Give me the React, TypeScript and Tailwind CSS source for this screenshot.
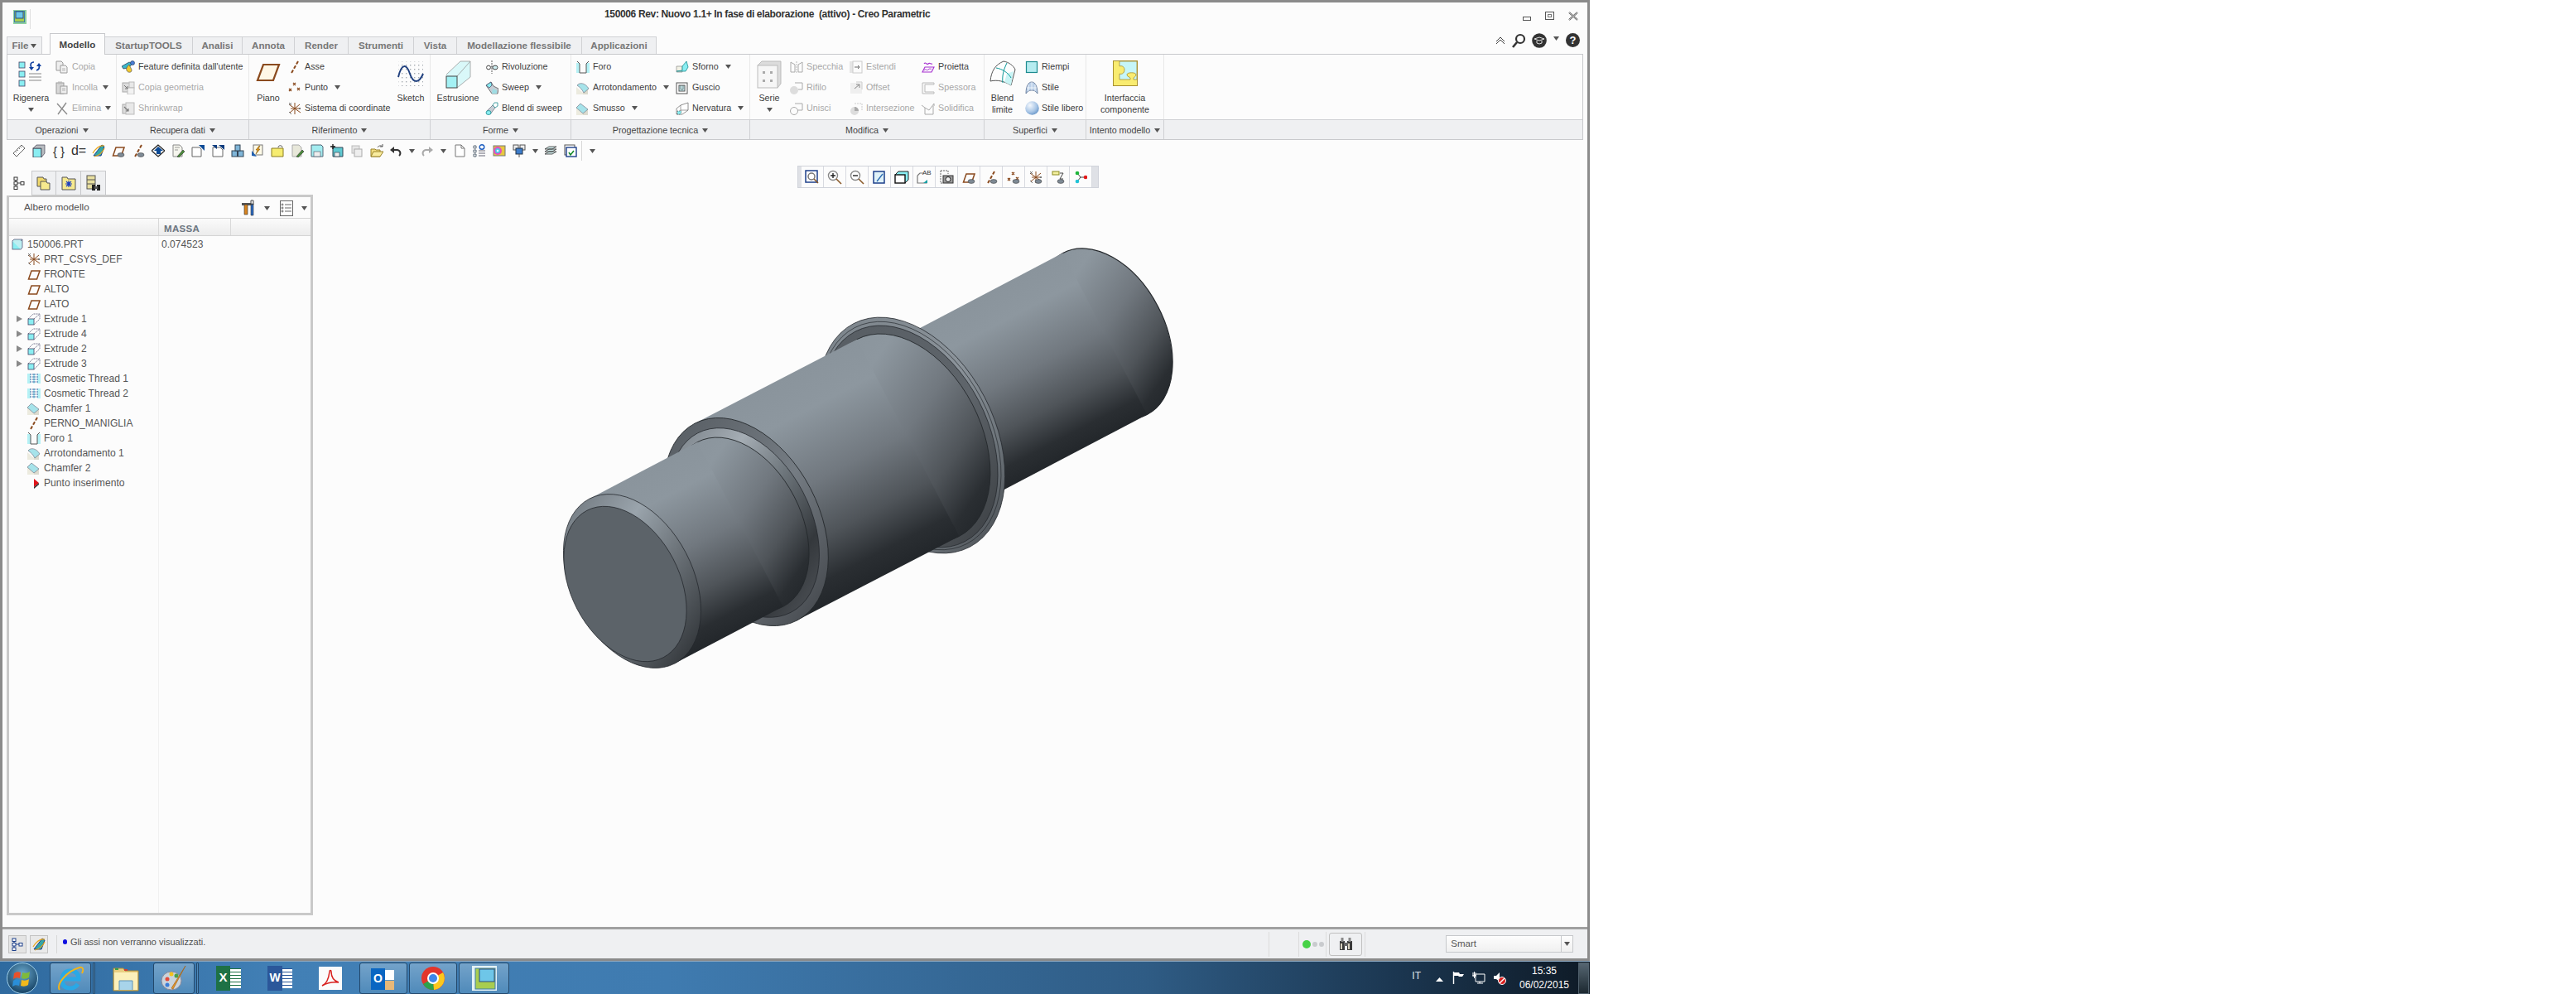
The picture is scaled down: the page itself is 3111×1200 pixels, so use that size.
import type { ReactNode } from 'react';

const BROWN = '#8a4a1e';
const CYAN = '#8aeef2';
const NAVY = '#1c3f8a';
const GR = '#9a9a9a';

const Svg = ({ s = 16, vb = 16, children }: { s?: number; vb?: number; children: ReactNode }) => (
  <svg width={s} height={s} viewBox={`0 0 ${vb} ${vb}`} className="block shrink-0">
    {children}
  </svg>
);

const Eye = () => <ellipse cx="11" cy="13" rx="4" ry="2.4" fill="#7f8b96" stroke="#444" strokeWidth="0.6" />;

// datum + feature icons
const PlaneI = ({ eye }: { eye?: boolean }) => (
  <Svg>
    <path d="M1.5 14 L5 4 H15 L11.5 14Z" fill="none" stroke={BROWN} strokeWidth="1.5" />
    {eye && <Eye />}
  </Svg>
);
const AxisI = ({ eye }: { eye?: boolean }) => (
  <Svg>
    <path d="M12 1 L4 15" stroke={BROWN} strokeWidth="2" strokeDasharray="4 2" fill="none" />
    {eye && <Eye />}
  </Svg>
);
const PointI = ({ eye }: { eye?: boolean }) => (
  <Svg>
    <path d="M6 2l3 3m0-3l-3 3M1 9l3 3m0-3l-3 3M11 8l3 3m0-3l-3 3" stroke={BROWN} strokeWidth="1.3" fill="none" />
    {eye && <Eye />}
  </Svg>
);
const CsysI = ({ eye }: { eye?: boolean }) => (
  <Svg>
    <path d="M8 1v14M1 3l14 10M14 3L2 13M3 8h10" stroke={BROWN} strokeWidth="1" fill="none" />
    <path d="M1 1l3 3m0-3L1 4M13 7l2 2m0-2l-2 2M1 12l3 3" stroke="#555" strokeWidth="0.8" fill="none" />
    {eye && <Eye />}
  </Svg>
);
const PartI = () => (
  <Svg s={14} vb={14}>
    <rect x="1" y="3" width="10" height="10" fill={CYAN} stroke="#557" strokeWidth="0.8" />
    <path d="M1 3l2-2h10v10l-2 2M11 3l2-2" fill="#bdeff2" stroke="#557" strokeWidth="0.8" />
  </Svg>
);
const ExtrudeI = () => (
  <Svg>
    <rect x="1" y="8" width="7" height="7" fill={CYAN} stroke="#446" strokeWidth="0.8" />
    <path d="M1 8l6-6h8v6l-7 7M8 8l7-6" fill="none" stroke="#446" strokeWidth="0.7" strokeDasharray="2 1" />
  </Svg>
);
const ThreadI = () => (
  <Svg>
    <rect x="0" y="2" width="16" height="12" fill="#b5f1f5" />
    <rect x="4" y="2" width="3" height="12" fill="#fbfbfb" />
    <rect x="9" y="2" width="3" height="12" fill="#fbfbfb" />
    <path d="M4 2v12M7 2v12M9 2v12M12 2v12" stroke={NAVY} strokeWidth="0.8" strokeDasharray="2 1" />
  </Svg>
);
const ChamferI = () => (
  <Svg>
    <path d="M0 7l8 7v2H0z" fill="#ecebdf" />
    <path d="M8 14v2h6v-7z" fill="#dcdbcf" />
    <path d="M0 7l5-5 9 7-6 5z" fill="#a6e3ea" stroke="#667" strokeWidth="0.6" />
  </Svg>
);
const RoundI = () => (
  <Svg>
    <path d="M0 7l8 7v2H0z" fill="#ecebdf" />
    <path d="M8 14v2h6v-7z" fill="#dcdbcf" />
    <path d="M1 5C4 1 11 2 15 9l-6 5C7 10 4 7 1 5z" fill="#a6e3ea" stroke="#667" strokeWidth="0.6" />
  </Svg>
);
const HoleI = () => (
  <Svg>
    <rect x="0" y="3" width="16" height="12" fill="#b5f1f5" />
    <path d="M1 1l3 3v11h8V4l3-3" fill="#fbfbfb" stroke="#555" strokeWidth="1" />
  </Svg>
);

const SmallIcons: Record<string, ReactNode> = {
  copy: (
    <Svg>
      <path d="M1 1h6l2 2v9H1z" fill="#eee" stroke={GR} />
      <path d="M6 6h6l2 2v7H6z" fill="#f4f4f4" stroke={GR} />
      <path d="M8 10h4M8 12h4" stroke={GR} strokeWidth="0.7" />
    </Svg>
  ),
  paste: (
    <Svg>
      <rect x="1" y="2" width="9" height="13" fill="#d8d8d8" stroke={GR} />
      <rect x="3" y="0.5" width="5" height="3" fill="#bbb" />
      <rect x="6" y="6" width="8" height="9" fill="#eee" stroke={GR} />
      <path d="M8 9h4M8 11h4" stroke={GR} strokeWidth="0.7" />
    </Svg>
  ),
  del: (
    <Svg>
      <path d="M2 2l12 13M13 1L3 15" stroke="#8d8d8d" strokeWidth="1.4" />
    </Svg>
  ),
  feature: (
    <Svg>
      <path d="M0 7L9 2l4 2-5 5-6 1z" fill="#3bb7c9" stroke="#235" strokeWidth="0.7" />
      <circle cx="13" cy="3" r="2.5" fill="#4a7fd8" stroke="#235" strokeWidth="0.6" />
      <path d="M9 5c-3 3-4 5-3 7 1 3 6 3 6 0 0-2-2-4-3-7z" fill="#f2c92e" stroke="#555" strokeWidth="0.7" />
    </Svg>
  ),
  geom: (
    <Svg>
      <rect x="1" y="2" width="9" height="11" fill="#ddd" stroke="#aaa" />
      <rect x="9" y="1" width="6" height="7" fill="#e8e8e8" stroke="#bbb" />
      <rect x="7" y="8" width="8" height="8" fill="#f2f2f2" stroke="#bbb" />
      <path d="M3 5l4 4M7 6v3H4" stroke="#777" strokeWidth="1" fill="none" />
    </Svg>
  ),
  rev: (
    <Svg>
      <path d="M8 0v16" stroke="#333" strokeWidth="0.8" strokeDasharray="2 1" />
      <path d="M4 8h8" stroke="#555" strokeWidth="0.7" />
      <circle cx="4" cy="8.5" r="2.4" fill="#fff" stroke="#444" />
      <ellipse cx="12" cy="8.5" rx="3" ry="2.4" fill="#cfeff2" stroke="#444" />
    </Svg>
  ),
  sweep: (
    <Svg>
      <path d="M1 5l6-4 3 5 6 3-1 6H8z" fill="#c6cdd4" stroke="#444" strokeWidth="0.7" />
      <path d="M1 5l6-4 1 4-3 3z" fill={CYAN} stroke="#446" strokeWidth="0.7" />
      <path d="M9 9l5 2v4H8z" fill="#9fdde4" />
    </Svg>
  ),
  bsweep: (
    <Svg>
      <path d="M2 11l4 4 6-8-3-3z" fill="#c6cdd4" stroke="#667" strokeWidth="0.7" />
      <ellipse cx="4" cy="13" rx="3" ry="2.5" fill={CYAN} stroke="#1d8b8f" strokeWidth="0.8" />
      <path d="M9 4l2-3h4v4l-3 2z" fill="#fff" stroke="#1d8b8f" strokeWidth="0.8" />
    </Svg>
  ),
  draft: (
    <Svg>
      <path d="M1 7h7v7H1z" fill="#f2f2e6" stroke="#777" strokeWidth="0.6" />
      <path d="M8 7l5-6 2 7-3 5H1l7-1z" fill={CYAN} stroke="#1d8b8f" strokeWidth="0.8" />
    </Svg>
  ),
  shell: (
    <Svg>
      <rect x="1" y="2" width="13" height="13" fill="#fff" stroke="#555" />
      <rect x="4" y="5" width="7" height="7" fill="#c8eef2" stroke="#555" />
      <path d="M6 5v5h3V5" fill="none" stroke="#555" strokeWidth="0.7" />
    </Svg>
  ),
  rib: (
    <Svg>
      <path d="M1 8l5-4 9-3v9l-7 5H1z" fill="#fff" stroke="#777" strokeWidth="0.8" />
      <path d="M6 4v6h9M6 10l-5 5" fill="none" stroke="#777" strokeWidth="0.7" />
      <path d="M2 11h5l-1 4H2z" fill={CYAN} stroke="#333" strokeWidth="0.6" strokeDasharray="1 1" />
    </Svg>
  ),
  mirror: (
    <Svg>
      <path d="M1 2l5 3v9H1zM15 2l-5 3v9h5z" fill="none" stroke="#aaa" />
      <path d="M8 1v14" stroke="#bbb" strokeDasharray="2 1" />
    </Svg>
  ),
  trim: (
    <Svg>
      <circle cx="5" cy="11" r="5" fill="#ddd" />
      <path d="M6 2h9v8H10" fill="none" stroke="#aaa" />
    </Svg>
  ),
  merge: (
    <Svg>
      <circle cx="5" cy="11" r="4.5" fill="none" stroke="#aaa" />
      <path d="M6 2h9v8H9" fill="none" stroke="#aaa" />
    </Svg>
  ),
  extend: (
    <Svg>
      <rect x="0" y="1" width="4" height="14" fill="#e5e5e5" />
      <rect x="4" y="1" width="11" height="14" fill="#fbfbfb" stroke="#ccc" />
      <path d="M6 8h6m-2-2l2 2-2 2" stroke="#666" fill="none" />
    </Svg>
  ),
  offset: (
    <Svg>
      <rect x="1" y="2" width="14" height="13" fill="#efefef" />
      <path d="M8 1h7v9" fill="none" stroke="#ccc" />
      <path d="M12 4L6 9m6-5v4m0-4H8" stroke="#888" fill="none" />
    </Svg>
  ),
  inter: (
    <Svg>
      <circle cx="6" cy="11" r="5" fill="#ddd" />
      <path d="M6 2h9v8" fill="none" stroke="#ccc" strokeDasharray="2 1" />
      <path d="M6 6a5 5 0 0 1 5 5H6z" fill="#aaa" />
    </Svg>
  ),
  project: (
    <Svg>
      <path d="M3 4c2-3 3 2 5 0s3 1 5 0M1 14l3-6h11l-3 6z" fill="none" stroke="#a52fd0" strokeWidth="1.1" />
      <path d="M3 12c2-3 3 1 5-1s3 0 4-1" fill="none" stroke="#a52fd0" />
    </Svg>
  ),
  thicken: (
    <Svg>
      <path d="M1 2h14v2H4v9h11v2H1z" fill="#f7f7f7" stroke="#bbb" />
    </Svg>
  ),
  solidify: (
    <Svg>
      <path d="M0 4l4 3 5 3 6-8v3M4 7v8h10V5" fill="none" stroke="#aaa" />
    </Svg>
  ),
  fill: (
    <Svg>
      <rect x="1.5" y="1.5" width="13" height="13" fill="#b5ecf0" stroke="#1d8b8f" strokeWidth="1.2" />
    </Svg>
  ),
  style: (
    <Svg>
      <path d="M1 15C1 6 4 1 8 1s7 5 7 14c-2-3-4-4-7-4s-5 1-7 4z" fill="#bcd1ea" stroke="#5a7090" strokeWidth="0.8" />
      <path d="M4 4v8M8 1v10M12 4v8M2 8h12" stroke="#fff" strokeWidth="0.7" />
    </Svg>
  ),
  ball: (
    <svg width="17" height="17" viewBox="0 0 16 16" className="block shrink-0">
      <defs>
        <radialGradient id="ballG" cx="0.35" cy="0.3" r="0.8">
          <stop offset="0" stopColor="#f4f8fd" />
          <stop offset="0.6" stopColor="#a9c6e6" />
          <stop offset="1" stopColor="#5f8fc4" />
        </radialGradient>
      </defs>
      <circle cx="8" cy="8" r="7.8" fill="url(#ballG)" />
    </svg>
  ),
  wrap: (
    <Svg>
      <rect x="1" y="3" width="9" height="11" fill="#ddd" stroke="#aaa" />
      <rect x="5" y="1" width="10" height="14" fill="#e8e8e8" stroke="#bbb" />
      <path d="M3 6l5 5M8 8v3H5" stroke="#777" strokeWidth="1.1" fill="none" />
    </Svg>
  ),
};

const Down = ({ cls = 'ml-[8px]' }: { cls?: string }) => (
  <svg width="7" height="5" viewBox="0 0 7 5" className={`block shrink-0 ${cls}`}>
    <path d="M0 0h7L3.5 5z" fill="#555" />
  </svg>
);

const Tool = ({ icon, label, off, arrow }: { icon: ReactNode; label: string; off?: boolean; arrow?: string }) => (
  <div className="flex h-[25px] items-center">
    <span className="flex w-[16px] shrink-0 justify-center">{icon}</span>
    <span className={`ml-[4px] whitespace-nowrap ${off ? 'text-[#a8a8a8]' : 'text-[#404040]'}`}>{label}</span>
    {arrow && <Down cls={arrow} />}
  </div>
);

const Big = ({ icon, lines, w, arrow }: { icon: ReactNode; lines: string[]; w: string; arrow?: boolean }) => (
  <div className={`flex shrink-0 flex-col items-center ${w}`}>
    <div className="flex h-[43px] items-start justify-center pt-[5px]">{icon}</div>
    {lines.map((l) => (
      <div key={l} className="h-[14px] whitespace-nowrap leading-[14px] text-[#404040]">
        {l}
      </div>
    ))}
    {arrow && (
      <div className="flex h-[14px] items-center">
        <Down cls="" />
      </div>
    )}
  </div>
);

const Group = ({ title, w, children }: { title: string; w: string; children: ReactNode }) => (
  <div className={`flex shrink-0 flex-col ${w}`}>
    <div className="flex h-[78px] border-r border-[#e8e8e8] pt-[2px]">{children}</div>
    <div className="flex h-[24px] items-center justify-center border-r border-t border-[#cfd0d3] bg-[#eff0f2] pt-[1px] text-[#444]">
      <span className="whitespace-nowrap">{title}</span>
      <Down cls="ml-[5px]" />
    </div>
  </div>
);

const BigIcons = {
  regen: (
    <svg width="32" height="33" viewBox="0 0 32 33" className="block">
      <rect x="1" y="2" width="7" height="7" fill={CYAN} stroke="#446" strokeWidth="0.8" />
      <rect x="1" y="13" width="7" height="7" fill={CYAN} stroke="#446" strokeWidth="0.8" />
      <rect x="1" y="24" width="7" height="7" fill={CYAN} stroke="#446" strokeWidth="0.8" />
      <path d="M19 2c-4 0-5 3-3 7M22 12c3-1 4-3 3-6" fill="none" stroke="#0f3f9f" strokeWidth="1.7" />
      <path d="M13 8h6l-3 4zM22 7h6l-3-4z" fill="#0f3f9f" />
      <path d="M13 16h15M13 20h15M13 24h15" stroke="#888" />
    </svg>
  ),
  plane: (
    <svg width="30" height="24" viewBox="0 0 30 24" className="mt-[3px] block">
      <path d="M2 21L9 2h19l-7 19z" fill="#fff7e6" stroke={BROWN} strokeWidth="2.2" />
    </svg>
  ),
  sketch: (
    <svg width="32" height="32" viewBox="0 0 32 32" className="block">
      <pattern id="dots" width="5" height="5" patternUnits="userSpaceOnUse">
        <rect width="1.4" height="1.4" fill="#a6acb2" />
      </pattern>
      <rect x="1" y="1" width="30" height="30" fill="url(#dots)" />
      <path d="M1 20C5 3 11 4 15 16s11 12 16 0" fill="none" stroke="#20407f" strokeWidth="2" />
    </svg>
  ),
  extrude: (
    <svg width="32" height="34" viewBox="0 0 32 34" className="block">
      <path d="M2 17L19 1h12v19L15 33H2z" fill="#d9f8f9" />
      <path d="M2 17L19 1h12v19L15 33M15 19L31 1" fill="none" stroke="#999" strokeWidth="0.8" />
      <rect x="2" y="19" width="13" height="14" fill="#a4f1f4" stroke="#444" />
    </svg>
  ),
  pattern: (
    <svg width="30" height="34" viewBox="0 0 30 34" className="block">
      <path d="M1 6l5-5h23v27l-4 5z" fill="#dcdcdc" stroke="#bbb" />
      <rect x="1" y="6" width="24" height="27" fill="#f6f6f6" stroke="#bbb" />
      <path d="M7 13h3v3H7zM16 13h3v3h-3zM7 23h3v3H7zM16 23h3v3h-3z" fill="#aaa" />
    </svg>
  ),
  blend: (
    <svg width="32" height="32" viewBox="0 0 32 32" className="block">
      <path d="M1 25C2 13 7 5 17 1c6 1 12 5 14 10l-5 19C18 25 9 23 1 25z" fill="#fdfdfd" stroke="#555" />
      <path d="M21 16l8-3-3 17-8-4z" fill="#c9f4f5" />
      <path d="M8 9c7 1 15 6 18 12M21 3c-4 8-6 16-5 24" fill="none" stroke="#0f9a9a" strokeWidth="1" />
    </svg>
  ),
  iface: (
    <svg width="30" height="31" viewBox="0 0 30 31" className="block">
      <rect x="0.5" y="0.5" width="29" height="30" fill="#f9ec70" stroke="#a89030" />
      <path
        d="M8 1H29V23H25V21C25 20 28 20 28 17C28 14 17 14 17 17C17 20 21 20 21 21V23H8V16C10 17 14 16 14 11C14 7 10 6 8 7Z"
        fill="#c6f6f8"
        stroke="#a89030"
        strokeWidth="0.8"
      />
    </svg>
  ),
};

const Hammer = () => (
  <svg width="20" height="20" viewBox="0 0 20 20" className="block">
    <path d="M1 4h11l1 3H1z" fill="#555" />
    <path d="M4 6h4v12H4z" fill="#d88420" stroke="#333" strokeWidth="0.6" />
    <path d="M12 5h3v14h-3z" fill="#2b6cc5" stroke="#333" strokeWidth="0.6" />
    <path d="M12 1h3v5h-3z" fill="none" stroke="#444" />
  </svg>
);

const QuickIcons: ReactNode[] = [
  <Svg key="q1">
    <path d="M1 11L11 1l4 4L5 15z" fill="#fff" stroke="#666" />
    <path d="M4 9l1 1M6 7l1 1M8 5l1 1M10 3l1 1" stroke="#666" />
  </Svg>,
  <Svg key="q2">
    <rect x="1" y="5" width="10" height="11" fill={CYAN} stroke="#445" />
    <path d="M1 5l4-4h10v10l-4 5V5z" fill="#b8bcc0" stroke="#445" strokeWidth="0.7" />
  </Svg>,
  <span key="q3" className="text-[15px] leading-none text-[#333]">{'{ }'}</span>,
  <span key="q4" className="text-[16px] leading-none text-[#333]">d=</span>,
  <Svg key="q5">
    <path d="M2 14L12 1l3 2-4 11z" fill="#35a6a6" stroke={NAVY} />
    <path d="M1 11C6 3 10 1 15 2M3 15c5-1 10-5 12-10" fill="none" stroke="#e8a41a" strokeWidth="1.2" />
  </Svg>,
  <PlaneI key="q6" eye />,
  <AxisI key="q7" eye />,
  <Svg key="q8">
    <path d="M8 1L0 8l8 7 8-7z" fill="#eee" stroke="#222" strokeWidth="1.2" />
    <path d="M8 3L3 8h3v4h5V8h3z" fill="#0c4a96" />
  </Svg>,
  <Svg key="q9">
    <path d="M2 1h8l3 3v11H2z" fill="#f6f6ee" stroke="#888" />
    <path d="M4 4h6M4 7h4" stroke="#999" />
    <path d="M7 15l7-8 2 2-7 7z" fill="#4a8d3a" stroke="#333" strokeWidth="0.6" />
  </Svg>,
  <Svg key="q10">
    <path d="M1 4h9l2 2v9H1z" fill="#fff" stroke="#666" />
    <path d="M9 1h7v7z" fill="#0c4a96" />
  </Svg>,
  <Svg key="q11">
    <path d="M2 4h9l3 3v8H2z" fill="#fff" stroke="#666" />
    <path d="M1 1h6v5zM9 1h7v6z" fill="#0f3d7f" />
  </Svg>,
  <Svg key="q12">
    <rect x="1" y="8" width="6.5" height="7" fill="#7fb5d8" stroke="#345" />
    <rect x="8.5" y="8" width="6.5" height="7" fill="#7fb5d8" stroke="#345" />
    <rect x="5" y="1" width="6" height="7" fill="#7fb5d8" stroke="#345" />
  </Svg>,
  <Svg key="q13">
    <rect x="3" y="1" width="11" height="12" fill="#fffbe8" stroke="#777" />
    <path d="M10 2L6 7h2l-2 5 5-6H9l2-4z" fill="#e59612" stroke="#6a4a10" strokeWidth="0.5" />
    <path d="M1 8v6l6 1z" fill="#1f5fb0" />
  </Svg>,
  <Svg key="q14">
    <path d="M1 5h14v10H1z" fill="#f6ec70" stroke="#8a7c20" />
    <path d="M9 4c0-3 5-3 5 0" fill="none" stroke="#555" />
  </Svg>,
  <Svg key="q15">
    <path d="M2 1h8l3 3v11H2z" fill="#e8e8da" stroke="#aaa" />
    <path d="M7 15l7-8 2 2-7 7z" fill="#4a8d3a" stroke="#333" strokeWidth="0.6" />
  </Svg>,
  <Svg key="q16">
    <path d="M1 1h12l2 2v12H1z" fill="#a3ecf0" stroke="#567" />
    <rect x="4" y="9" width="8" height="6" fill="#eee" stroke="#567" strokeWidth="0.7" />
  </Svg>,
  <Svg key="q17">
    <path d="M3 4h12v11H3z" fill="#5fc9d1" stroke="#345" />
    <rect x="5" y="10" width="6" height="5" fill="#eee" stroke="#345" strokeWidth="0.7" />
    <path d="M0 3h6M3 0v6" stroke="#111" strokeWidth="1.3" fill="none" />
  </Svg>,
  <Svg key="q18">
    <rect x="2" y="2" width="9" height="9" fill="#e6e6e6" stroke="#bbb" />
    <rect x="5" y="6" width="9" height="9" fill="#eee" stroke="#aaa" />
  </Svg>,
  <Svg key="q19">
    <path d="M1 6h5l1 1h5v8H1z" fill="#f3df82" stroke="#99822a" />
    <path d="M1 15l3-6h12l-4 6z" fill="#f9ec9f" stroke="#99822a" />
    <path d="M9 4c1-2 4-3 6-1m0-3v3h-3" fill="none" stroke="#555" />
  </Svg>,
  <Svg key="q20">
    <path d="M3 7h6a4 4 0 0 1 2 7" fill="none" stroke="#333" strokeWidth="2" />
    <path d="M0 7l5-4v8z" fill="#333" />
  </Svg>,
  <Svg key="q21">
    <path d="M13 7H7a4 4 0 0 0-2 7" fill="none" stroke="#aaa" strokeWidth="2" />
    <path d="M16 7l-5-4v8z" fill="#aaa" />
  </Svg>,
  <Svg key="q22">
    <path d="M3 1h7l4 4v10H3z" fill="#fff" stroke="#777" />
    <path d="M10 1v4h4" fill="none" stroke="#777" />
  </Svg>,
  <Svg key="q23">
    <path d="M1 2h3v3H1zM1 7h3v3H1zM1 12h3v3H1z" fill="none" stroke="#345" strokeWidth="0.8" />
    <path d="M7 8h8M7 11h8M7 14h8" stroke="#667" />
    <circle cx="11" cy="3.5" r="2.8" fill="none" stroke="#1b5cc0" strokeWidth="1.4" />
  </Svg>,
  <Svg key="q24">
    <rect x="1" y="2" width="14" height="12" fill="#e8c740" stroke="#777" />
    <circle cx="6" cy="8" r="5" fill="#e34fc0" />
    <circle cx="6" cy="8" r="3" fill="#4ac9e3" />
    <circle cx="6" cy="8" r="1.3" fill="#fff" />
  </Svg>,
  <Svg key="q25">
    <rect x="1" y="1" width="6" height="6" fill="#eee" stroke="#555" />
    <rect x="9" y="1" width="6" height="6" fill="#eee" stroke="#555" />
    <rect x="4" y="5" width="8" height="7" fill="#3d7dcb" stroke="#234" />
    <path d="M8 12v4" stroke="#555" />
  </Svg>,
  <Svg key="q26">
    <path d="M1 6l5-3h9l-5 3zM1 9l5-3h9l-5 3zM1 12l5-3h9l-5 3z" fill="#cde6e6" stroke="#333" strokeWidth="0.8" />
  </Svg>,
  <Svg key="q27">
    <rect x="1" y="1" width="12" height="12" fill="#fff" stroke="#555" />
    <rect x="3" y="4" width="12" height="11" fill="#fff" stroke={NAVY} strokeWidth="1.4" />
    <path d="M6 10l2 3 4-5" fill="none" stroke="#148a2a" strokeWidth="1.6" />
  </Svg>,
];

// width of each quick toolbar cell, arrows are narrower
const quickRow: Array<{ icon?: number; w: string }> = [
  ...Array.from({ length: 20 }, (_, i) => ({ icon: i, w: 'w-[24px]' })),
  { w: 'w-[12px]' },
  { icon: 20, w: 'w-[24px]' },
  { w: 'w-[16px]' },
  { icon: 21, w: 'w-[24px]' },
  { icon: 22, w: 'w-[24px]' },
  { icon: 23, w: 'w-[24px]' },
  { icon: 24, w: 'w-[24px]' },
  { w: 'w-[14px]' },
  { icon: 25, w: 'w-[24px]' },
  { icon: 26, w: 'w-[24px]' },
];

const FloatIcons: ReactNode[] = [
  <Svg key="f1" s={18} vb={18}>
    <rect x="1" y="1" width="14" height="14" fill="#fff" stroke={NAVY} strokeWidth="1.5" />
    <circle cx="8" cy="8" r="4" fill="none" stroke="#777" strokeWidth="1.5" />
    <path d="M11 11l5 5" stroke="#8a5a2a" strokeWidth="1.6" />
  </Svg>,
  <Svg key="f2" s={18} vb={18}>
    <circle cx="7" cy="7" r="5.5" fill="#fff" stroke="#888" strokeWidth="1.4" />
    <path d="M4 7h6M7 4v6" stroke="#222" strokeWidth="1.4" />
    <path d="M11 11l6 6" stroke="#8a5a2a" strokeWidth="1.6" />
  </Svg>,
  <Svg key="f3" s={18} vb={18}>
    <circle cx="7" cy="7" r="5.5" fill="#fff" stroke="#888" strokeWidth="1.4" />
    <path d="M4 7h6" stroke="#222" strokeWidth="1.4" />
    <path d="M11 11l6 6" stroke="#8a5a2a" strokeWidth="1.6" />
  </Svg>,
  <Svg key="f4" s={18} vb={18}>
    <rect x="2" y="2" width="13" height="14" fill="#dff1f8" stroke={NAVY} strokeWidth="1.5" />
    <path d="M6 14l7-9" stroke="#2a6ab0" strokeWidth="1.3" />
  </Svg>,
  <Svg key="f5" s={18} vb={18}>
    <path d="M1 6l4-4h12v10l-4 4" fill={CYAN} stroke="#222" />
    <rect x="1" y="6" width="12" height="10" fill="#fff" stroke="#111" strokeWidth="1.4" />
  </Svg>,
  <span key="f6" className="relative block h-[18px] w-[18px]">
    <Svg s={18} vb={18}>
      <path d="M1 7l3-3h4M1 7v9h11v-3" fill="none" stroke="#777" strokeWidth="1.2" />
      <path d="M8 16h5v-4z" fill="#1aa0a6" />
    </Svg>
    <span className="absolute left-[7px] top-[-1px] text-[8px] leading-[10px] text-[#333]">AB</span>
  </span>,
  <Svg key="f7" s={18} vb={18}>
    <path d="M2 1h9v4M2 1v15h3" fill="none" stroke="#666" strokeDasharray="2 1" />
    <rect x="5" y="7" width="12" height="9" fill="#999" stroke="#333" />
    <circle cx="11" cy="11.5" r="3" fill="#eee" stroke="#222" />
  </Svg>,
  <PlaneI key="f8" eye />,
  <AxisI key="f9" eye />,
  <PointI key="f10" eye />,
  <CsysI key="f11" eye />,
  <Svg key="f12">
    <rect x="1" y="1" width="8" height="4" fill="#f4f0a0" stroke="#8a8a20" />
    <path d="M10 3h4l-4 7h4" fill="none" stroke="#444" />
    <Eye />
  </Svg>,
  <Svg key="f13">
    <path d="M4 3l4 5 7 0M8 8l-4 5" stroke="#444" fill="none" />
    <circle cx="4" cy="3" r="2.3" fill="#1eb53a" />
    <circle cx="14" cy="8" r="2.3" fill="#e21a1a" />
    <circle cx="4" cy="13" r="2.3" fill="#22c4d8" />
  </Svg>,
];

type Node = { label: string; icon: ReactNode; arrow?: boolean };
const treeNodes: Node[] = [
  { label: 'PRT_CSYS_DEF', icon: <CsysI /> },
  { label: 'FRONTE', icon: <PlaneI /> },
  { label: 'ALTO', icon: <PlaneI /> },
  { label: 'LATO', icon: <PlaneI /> },
  { label: 'Extrude 1', icon: <ExtrudeI />, arrow: true },
  { label: 'Extrude 4', icon: <ExtrudeI />, arrow: true },
  { label: 'Extrude 2', icon: <ExtrudeI />, arrow: true },
  { label: 'Extrude 3', icon: <ExtrudeI />, arrow: true },
  { label: 'Cosmetic Thread 1', icon: <ThreadI /> },
  { label: 'Cosmetic Thread 2', icon: <ThreadI /> },
  { label: 'Chamfer 1', icon: <ChamferI /> },
  { label: 'PERNO_MANIGLIA', icon: <AxisI /> },
  { label: 'Foro 1', icon: <HoleI /> },
  { label: 'Arrotondamento 1', icon: <RoundI /> },
  { label: 'Chamfer 2', icon: <ChamferI /> },
  {
    label: 'Punto inserimento',
    icon: (
      <Svg>
        <path d="M2 8h6V3l6 5-6 5V8H2z" fill="#e0141a" />
        <path d="M8 13l6-5v2l-6 5z" fill="#333" />
      </Svg>
    ),
  },
];

const tabs = [
  { t: 'StartupTOOLS', w: 'w-[106px]' },
  { t: 'Analisi', w: 'w-[60px]' },
  { t: 'Annota', w: 'w-[63px]' },
  { t: 'Render', w: 'w-[65px]' },
  { t: 'Strumenti', w: 'w-[79px]' },
  { t: 'Vista', w: 'w-[52px]' },
  { t: 'Modellazione flessibile', w: 'w-[151px]' },
  { t: 'Applicazioni', w: 'w-[90px]' },
];

// page coordinates, the svg viewBox below is cut to them
const NX = 0.4617;
const NY = 0.887;
const DEG = -27.5;
const RATIO = 0.654;

const Ring = ({ c, r, fill, line = '#23272b', sw = 0.8 }: { c: number[]; r: number; fill: string; line?: string; sw?: number }) => (
  <ellipse
    cx={c[0]}
    cy={c[1]}
    rx={r * RATIO}
    ry={r}
    fill={fill}
    stroke={line}
    strokeWidth={sw}
    transform={`rotate(${DEG} ${c[0]} ${c[1]})`}
  />
);

const bodyPath = (a: number[], b: number[], r: number) =>
  `M${a[0] + r * NX} ${a[1] + r * NY}L${b[0] + r * NX} ${b[1] + r * NY}L${b[0] - r * NX} ${b[1] - r * NY}L${a[0] - r * NX} ${a[1] - r * NY}Z`;

const cylStops = (
  <>
    <stop offset="0" stopColor="#8a949c" />
    <stop offset="0.18" stopColor="#8d979f" />
    <stop offset="0.48" stopColor="#71787f" />
    <stop offset="0.72" stopColor="#4f5459" />
    <stop offset="0.9" stopColor="#2a2e32" />
    <stop offset="1" stopColor="#23272b" />
  </>
);

const Grad = ({ id, c, r, children }: { id: string; c: number[]; r: number; children: ReactNode }) => (
  <linearGradient
    id={id}
    gradientUnits="userSpaceOnUse"
    x1={c[0] - r * NX}
    y1={c[1] - r * NY}
    x2={c[0] + r * NX}
    y2={c[1] + r * NY}
  >
    {children}
  </linearGradient>
);

const Shaft = () => {
  const c0 = [763.5, 701.5];
  const cFace = [755, 705];
  const cNeck = [894, 633];
  const cLeft = [901, 630];
  const cFillet = [899, 631];
  const cMidEnd = [1096.6, 528.6];
  const cFl1 = [1099, 527];
  const cFl2 = [1101, 525.5];
  const cEnd = [1334.5, 403];
  return (
    <svg width="800" height="550" viewBox="640 280 800 550" className="absolute left-[262px] top-[85px]">
      <defs>
        <Grad id="gSmall" c={c0} r={112}>{cylStops}</Grad>
        <Grad id="gMid" c={cLeft} r={134}>{cylStops}</Grad>
        <Grad id="gEnd" c={cEnd} r={110}>{cylStops}</Grad>
        <Grad id="gFlange" c={cFl2} r={152}>
          <stop offset="0" stopColor="#7d858c" />
          <stop offset="0.5" stopColor="#8b939a" />
          <stop offset="0.82" stopColor="#6a7177" />
          <stop offset="1" stopColor="#4f5459" />
        </Grad>
        <Grad id="gFlangeIn" c={cFl1} r={143}>
          <stop offset="0" stopColor="#585e64" />
          <stop offset="0.6" stopColor="#5f656b" />
          <stop offset="1" stopColor="#3f4347" />
        </Grad>
        <Grad id="gRing" c={cLeft} r={134}>
          <stop offset="0" stopColor="#595f65" />
          <stop offset="0.55" stopColor="#757c83" />
          <stop offset="1" stopColor="#474b50" />
        </Grad>
        <Grad id="gFillet" c={cFillet} r={122}>
          <stop offset="0" stopColor="#80888f" />
          <stop offset="0.25" stopColor="#a5adb4" />
          <stop offset="0.52" stopColor="#6d757b" />
          <stop offset="0.82" stopColor="#34383c" />
          <stop offset="1" stopColor="#494d52" />
        </Grad>
        <Grad id="gCham" c={c0} r={112}>
          <stop offset="0" stopColor="#757d84" />
          <stop offset="0.3" stopColor="#9aa4ac" />
          <stop offset="0.6" stopColor="#6d747a" />
          <stop offset="1" stopColor="#33373b" />
        </Grad>
      </defs>
      <Ring c={cEnd} r={110} fill="url(#gEnd)" sw={1.2} />
      <path d={bodyPath(cFl2, cEnd, 110)} fill="url(#gEnd)" />
      <Ring c={cFl2} r={152} fill="url(#gFlange)" sw={0.7} />
      <Ring c={[1100, 526]} r={147} fill="url(#gFlange)" sw={0.6} />
      <Ring c={cFl1} r={143} fill="url(#gFlangeIn)" sw={0.7} />
      <Ring c={cMidEnd} r={134} fill="url(#gMid)" sw={0.8} />
      <path d={bodyPath(cLeft, cMidEnd, 134)} fill="url(#gMid)" />
      <Ring c={cLeft} r={134} fill="url(#gRing)" sw={0.8} />
      <Ring c={cFillet} r={122} fill="url(#gFillet)" sw={0.7} />
      <Ring c={cNeck} r={112} fill="url(#gSmall)" sw={0.8} />
      <path d={bodyPath(c0, cNeck, 112)} fill="url(#gSmall)" />
      <Ring c={c0} r={112} fill="url(#gCham)" sw={0.7} />
      <Ring c={cFace} r={100} fill="#5c6369" sw={0.7} />
    </svg>
  );
};

const Taskbtn = ({ children, w = 'w-[50px]' }: { children: ReactNode; w?: string }) => (
  <div
    className={`flex h-[38px] shrink-0 items-center justify-center rounded-[3px] border border-[#23486b] bg-[linear-gradient(180deg,#74a3ca,#4f8aba)] ${w}`}
  >
    {children}
  </div>
);

const Plain = ({ children, w }: { children: ReactNode; w: string }) => (
  <div className={`flex h-[38px] shrink-0 items-center justify-center ${w}`}>{children}</div>
);

const Grip = () => <div className="h-[38px] w-[3px] shrink-0 rounded-[1px] border border-[#23486b] bg-[#4f8aba]" />;

export default function App() {
  return (
    <div className="flex h-[1200px] w-[3111px] bg-white font-['Liberation_Sans',Arial,sans-serif] text-[10.75px] text-[#505050]">
      <div className="flex h-[1200px] w-[1920px] shrink-0 flex-col">
        <div className="flex h-[1160px] flex-col border-x-[3px] border-y-[3px] border-[#8b8b8b] bg-[#fcfcfc]">
          {/* title bar */}
          <div className="flex h-[37px] shrink-0 items-start">
            <div className="ml-[13px] mt-[8px] flex h-[24px] items-start border-r border-[#e0e0e0] pr-[4px]">
              <svg width="16" height="17" viewBox="0 0 16 17" className="mt-[1px] block">
                <rect width="16" height="17" fill="#8fd0a0" />
                <rect x="1.5" y="1.5" width="12" height="13" fill="#a8cd4f" stroke="#3c7da8" />
                <rect x="3" y="2" width="9" height="8" fill="#6ec6e8" stroke="#2d4e7e" />
              </svg>
            </div>
            <div className="ml-[693px] mt-[7px] whitespace-pre text-[12px] font-bold leading-[14px] tracking-[-0.35px] text-[#333]">
              150006 Rev: Nuovo 1.1+ In fase di elaborazione  (attivo) - Creo Parametric
            </div>
            <div className="ml-auto mr-[11px] mt-[11px] flex items-start gap-[17px]">
              <span className="mt-[6px] block h-[5px] w-[10px] border border-[#555]" />
              <span className="block h-[10px] w-[11px] border border-[#555] p-[2px]">
                <span className="block h-[4px] border border-[#777]" />
              </span>
              <svg width="12" height="11" viewBox="0 0 12 11" className="block">
                <path d="M1 1l10 9M11 1L1 10" stroke="#555" strokeWidth="2" />
                <path d="M1 1l10 9M11 1L1 10" stroke="#fff" strokeWidth="0.7" />
              </svg>
            </div>
          </div>

          {/* tabs */}
          <div className="relative z-10 flex h-[25px] shrink-0 items-end pl-[5px] pr-[9px] text-[11.6px] font-bold text-[#777]">
            <div className="flex h-[21px] w-[43px] items-center justify-center gap-[3px] border border-b-0 border-[#d0d1d4] bg-[#eff0f2]">
              File
              <Down cls="" />
            </div>
            <div className="ml-[9px] flex h-[26px] w-[67px] translate-y-[1px] items-center justify-center border border-b-0 border-[#c8c9cc] bg-[#fcfcfc] text-[#444]">
              Modello
            </div>
            {tabs.map((t) => (
              <div
                key={t.t}
                className={`flex h-[21px] items-center justify-center border-r border-t border-[#d0d1d4] bg-[#eff0f2] ${t.w}`}
              >
                {t.t}
              </div>
            ))}
            <div className="ml-auto flex h-[25px] items-start gap-[6px] text-[#333]">
              <svg width="12" height="10" viewBox="0 0 12 10" className="mr-[1px] mt-[4px] block">
                <path d="M1 6l5-5 5 5M1 9l5-5 5 5" fill="#fff" stroke="#444" />
              </svg>
              <svg width="18" height="18" viewBox="0 0 18 18" className="block">
                <circle cx="11" cy="7" r="5" fill="none" stroke="#333" strokeWidth="2.2" />
                <path d="M7 11l-5 6" stroke="#333" strokeWidth="2.6" />
              </svg>
              <svg width="18" height="18" viewBox="0 0 18 18" className="ml-[1px] block">
                <circle cx="9" cy="9" r="8.8" fill="#333" />
                <path d="M3 7l6-2 6 2-6 2zM6 9v3l3 1 3-1V9" fill="none" stroke="#ddd" strokeWidth="1" />
              </svg>
              <Down cls="mt-[4px] ml-[2px]" />
              <div className="ml-[2px] flex h-[17px] w-[17px] items-center justify-center rounded-full bg-[#333] text-[13px] font-bold leading-none text-white">
                ?
              </div>
            </div>
          </div>

          {/* ribbon */}
          <div className="mx-[5px] flex h-[104px] shrink-0 border border-[#c8c9cc] bg-[#fcfcfc]">
            <Group title="Operazioni" w="w-[132px]">
              <div className="ml-[7px]">
                <Big icon={BigIcons.regen} lines={['Rigenera']} w="w-[43px]" arrow />
              </div>
              <div className="ml-[8px]">
                <Tool icon={SmallIcons.copy} label="Copia" off />
                <Tool icon={SmallIcons.paste} label="Incolla" off arrow="ml-[6px]" />
                <Tool icon={SmallIcons.del} label="Elimina" off arrow="ml-[5px]" />
              </div>
            </Group>
            <Group title="Recupera dati" w="w-[160px]">
              <div className="ml-[6px]">
                <Tool icon={SmallIcons.feature} label="Feature definita dall'utente" />
                <Tool icon={SmallIcons.geom} label="Copia geometria" off />
                <Tool icon={SmallIcons.wrap} label="Shrinkwrap" off />
              </div>
            </Group>
            <Group title="Riferimento" w="w-[219px]">
              <div className="ml-[8px]">
                <Big icon={BigIcons.plane} lines={['Piano']} w="w-[30px]" />
              </div>
              <div className="ml-[9px] w-[124px]">
                <Tool icon={<AxisI />} label="Asse" />
                <Tool icon={<PointI />} label="Punto" arrow="ml-[8px]" />
                <Tool icon={<CsysI />} label="Sistema di coordinate" />
              </div>
              <div className="ml-[8px]">
                <Big icon={BigIcons.sketch} lines={['Sketch']} w="w-[32px]" />
              </div>
            </Group>
            <Group title="Forme" w="w-[170px]">
              <div className="ml-[7px]">
                <Big icon={BigIcons.extrude} lines={['Estrusione']} w="w-[52px]" />
              </div>
              <div className="ml-[7px]">
                <Tool icon={SmallIcons.rev} label="Rivoluzione" />
                <Tool icon={SmallIcons.sweep} label="Sweep" arrow="ml-[8px]" />
                <Tool icon={SmallIcons.bsweep} label="Blend di sweep" />
              </div>
            </Group>
            <Group title="Progettazione tecnica" w="w-[216px]">
              <div className="ml-[6px] w-[120px]">
                <Tool icon={<HoleI />} label="Foro" />
                <Tool icon={<RoundI />} label="Arrotondamento" arrow="ml-[8px]" />
                <Tool icon={<ChamferI />} label="Smusso" arrow="ml-[8px]" />
              </div>
              <div>
                <Tool icon={SmallIcons.draft} label="Sforno" arrow="ml-[8px]" />
                <Tool icon={SmallIcons.shell} label="Guscio" />
                <Tool icon={SmallIcons.rib} label="Nervatura" arrow="ml-[8px]" />
              </div>
            </Group>
            <Group title="Modifica" w="w-[283px]">
              <div className="ml-[10px]">
                <Big icon={BigIcons.pattern} lines={['Serie']} w="w-[26px]" arrow />
              </div>
              <div className="ml-[12px] w-[72px]">
                <Tool icon={SmallIcons.mirror} label="Specchia" off />
                <Tool icon={SmallIcons.trim} label="Rifilo" off />
                <Tool icon={SmallIcons.merge} label="Unisci" off />
              </div>
              <div className="w-[87px]">
                <Tool icon={SmallIcons.extend} label="Estendi" off />
                <Tool icon={SmallIcons.offset} label="Offset" off />
                <Tool icon={SmallIcons.inter} label="Intersezione" off />
              </div>
              <div>
                <Tool icon={SmallIcons.project} label="Proietta" />
                <Tool icon={SmallIcons.thicken} label="Spessora" off />
                <Tool icon={SmallIcons.solidify} label="Solidifica" off />
              </div>
            </Group>
            <Group title="Superfici" w="w-[123px]">
              <div className="ml-[6px]">
                <Big icon={BigIcons.blend} lines={['Blend', 'limite']} w="w-[31px]" />
              </div>
              <div className="ml-[12px]">
                <Tool icon={SmallIcons.fill} label="Riempi" />
                <Tool icon={SmallIcons.style} label="Stile" />
                <Tool icon={SmallIcons.ball} label="Stile libero" />
              </div>
            </Group>
            <Group title="Intento modello" w="w-[94px]">
              <Big icon={BigIcons.iface} lines={['Interfaccia', 'componente']} w="w-[93px]" />
            </Group>
            <div className="flex flex-1 flex-col">
              <div className="h-[78px]" />
              <div className="h-[24px] border-t border-[#cfd0d3] bg-[#eff0f2]" />
            </div>
          </div>

          {/* quick toolbar */}
          <div className="flex h-[26px] shrink-0 items-center pl-[8px]">
            {quickRow.map((q, i) => (
              <div key={i} className={`flex h-[20px] shrink-0 items-center justify-center ${q.w}`}>
                {q.icon !== undefined ? QuickIcons[q.icon] : <Down cls="" />}
              </div>
            ))}
            <div className="ml-[1px] h-[24px] w-px bg-[#d8d8d8]" />
            <Down cls="ml-[9px]" />
          </div>

          {/* main */}
          <div className="flex min-h-0 flex-1">
            <div className="ml-[5px] flex w-[370px] shrink-0 flex-col pb-[14px] pt-[11px]">
              <div className="flex h-[29px] shrink-0">
                <div className="z-10 flex h-[30px] w-[30px] items-center justify-center bg-[#fcfcfc]">
                  <Svg>
                    <path d="M4 4v10M4 8h6" stroke="#444" />
                    <rect x="2" y="1" width="4" height="3.5" fill="#fff" stroke="#333" />
                    <rect x="2" y="6.5" width="4" height="3.5" fill="#fff" stroke="#333" />
                    <rect x="10" y="6.5" width="4" height="3.5" fill="#fff" stroke="#333" />
                    <rect x="2" y="12" width="4" height="3.5" fill="#fff" stroke="#333" />
                  </Svg>
                </div>
                <div className="flex w-[30px] items-center justify-center border-x border-t border-[#c8c9cc] bg-[#eff0f2]">
                  <Svg s={18} vb={18}>
                    <path d="M1 2h7l1 2h3v9H1z" fill="#f1d96c" stroke="#555" />
                    <path d="M5 7h7l1 2h3v8H5z" fill="#f6e98e" stroke="#555" />
                  </Svg>
                </div>
                <div className="flex w-[30px] items-center justify-center border-r border-t border-[#c8c9cc] bg-[#eff0f2]">
                  <Svg s={18} vb={18}>
                    <path d="M1 2h6l1 2h9v13H1z" fill="#f6e98e" stroke="#555" />
                    <path d="M9 6v8M5 10h8M6 7l6 6M12 7l-6 6" stroke="#1d3fc0" strokeWidth="1.2" />
                  </Svg>
                </div>
                <div className="flex w-[30px] items-center justify-center border-r border-t border-[#c8c9cc] bg-[#eff0f2]">
                  <Svg s={20} vb={20}>
                    <rect x="2" y="1" width="10" height="16" fill="#e8dfa0" stroke="#555" />
                    <path d="M2 6h10M2 11h10" stroke="#555" />
                    <rect x="8" y="12" width="4" height="7" fill="#222" />
                    <rect x="14" y="12" width="4" height="7" fill="#222" />
                    <rect x="11" y="14" width="4" height="3" fill="#555" />
                  </Svg>
                </div>
              </div>
              <div className="flex min-h-0 flex-1 flex-col border-[3px] border-[#c9c9c9] bg-[#fcfcfc]">
                <div className="flex h-[26px] shrink-0 items-center border-b border-[#d4d4d4] pl-[18px] pr-[4px] pt-[1px] text-[11.8px] text-[#505050]">
                  <span>Albero modello</span>
                  <span className="ml-auto block">
                    <Hammer />
                  </span>
                  <Down cls="ml-[8px]" />
                  <span className="ml-[12px] block">
                    <svg width="16" height="19" viewBox="0 0 16 19" className="block">
                      <rect x="0.5" y="0.5" width="15" height="18" fill="#fff" stroke="#666" />
                      <path d="M6 5h8M6 9h8M6 13h8" stroke="#666" />
                      <circle cx="3" cy="5" r="1" fill="none" stroke="#666" />
                      <circle cx="3" cy="9" r="1" fill="none" stroke="#666" />
                      <circle cx="3" cy="13" r="1" fill="none" stroke="#666" />
                    </svg>
                  </span>
                  <Down cls="ml-[10px]" />
                </div>
                <div className="flex h-[21px] shrink-0 border-b border-[#d4d4d4] bg-[linear-gradient(180deg,#fbfbfb,#ececec)] pr-[1px]">
                  <div className="w-[181px] border-r border-[#d9d9d9]" />
                  <div className="flex w-[87px] items-center border-r border-[#d9d9d9] pl-[6px] pt-[5px] text-[11.5px] font-bold tracking-[0.3px] text-[#6b7580]">
                    MASSA
                  </div>
                </div>
                <div className="flex min-h-0 flex-1 text-[12.1px] leading-[18px] text-[#555]">
                  <div className="w-[181px] shrink-0 border-r border-[#f1f1f1] pt-[1px]">
                    <div className="flex h-[18px] items-center pl-[3px]">
                      <PartI />
                      <span className="ml-[5px]">150006.PRT</span>
                    </div>
                    {treeNodes.map((n) => (
                      <div key={n.label} className="flex h-[18px] items-center pl-[9px]">
                        <span className="block w-[13px] shrink-0">
                          {n.arrow && (
                            <svg width="7" height="8" viewBox="0 0 7 8" className="block">
                              <path d="M0 0l7 4-7 4z" fill="#8a8a8a" />
                            </svg>
                          )}
                        </span>
                        <span className="block w-[16px] shrink-0">{n.icon}</span>
                        <span className="ml-[4px] whitespace-nowrap">{n.label}</span>
                      </div>
                    ))}
                  </div>
                  <div className="pl-[3px] pt-[1px]">0.074523</div>
                </div>
              </div>
            </div>

            {/* graphics window */}
            <div className="relative min-w-0 flex-1">
              <div className="ml-[585px] mt-[5px] flex h-[27px] w-[364px] border border-[#d0d3da] bg-[#fcfcfc]">
                <div className="w-[4px] shrink-0 bg-[#dfe1e6]" />
                {FloatIcons.map((ic, i) => (
                  <div key={i} className="flex w-[27px] shrink-0 items-center justify-center border-r border-[#d8dae0]">
                    {ic}
                  </div>
                ))}
                <div className="flex-1 bg-[#dfe1e6]" />
              </div>
              <Shaft />
            </div>
          </div>

          {/* status bar */}
          <div className="flex h-[38px] shrink-0 items-center border-t-[3px] border-[#a0a0a0] bg-[#eff0f2] pl-[7px] text-[11px] text-[#505050]">
            <div className="flex h-[22px] w-[22px] items-center justify-center border border-[#c3c3c3] bg-[#e4e4e4]">
              <Svg>
                <path d="M4 4v10M4 8h6" stroke="#1c3f8a" />
                <rect x="2" y="1" width="4" height="3.5" fill="#fff" stroke="#1c3f8a" />
                <rect x="2" y="6.5" width="4" height="3.5" fill="#fff" stroke="#1c3f8a" />
                <rect x="10" y="6.5" width="4" height="3.5" fill="#fff" stroke="#1c3f8a" />
                <rect x="2" y="12" width="4" height="3.5" fill="#fff" stroke="#1c3f8a" />
              </Svg>
            </div>
            <div className="ml-[4px] flex h-[22px] w-[22px] items-center justify-center border border-[#c3c3c3] bg-[#e9e9e9]">
              <Svg>
                <path d="M2 14L12 1l3 2-4 11z" fill="#35a6a6" stroke={NAVY} />
                <path d="M1 11C6 3 10 1 15 2M3 15c5-1 10-5 12-10" fill="none" stroke="#e8a41a" strokeWidth="1.2" />
              </Svg>
            </div>
            <div className="ml-[10px] h-[22px] w-px bg-[#d8d8d8]" />
            <span className="ml-[7px] mb-[6px] block h-[6px] w-[5px] rounded-full bg-[#1010e0]" />
            <span className="ml-[4px] mb-[5px] whitespace-nowrap">Gli assi non verranno visualizzati.</span>
            <div className="ml-[1284px] h-[30px] w-px bg-[#dcdcdc]" />
            <div className="ml-[35px] h-[30px] w-px bg-[#dcdcdc]" />
            <span className="ml-[4px] block h-[10px] w-[10px] rounded-full bg-[#46d246]" />
            <span className="ml-[2px] block h-[6px] w-[6px] rounded-full bg-[#c9cbce]" />
            <span className="ml-[2px] block h-[6px] w-[6px] rounded-full bg-[#c9cbce]" />
            <div className="ml-[2px] h-[30px] w-px bg-[#dcdcdc]" />
            <div className="ml-[3px] flex h-[28px] w-[40px] items-center justify-center rounded-[3px] border border-[#c0c0c0]">
              <svg width="17" height="15" viewBox="0 0 17 15" className="block">
                <rect x="1" y="4" width="6" height="11" fill="#3a3a3a" />
                <rect x="10" y="4" width="6" height="11" fill="#3a3a3a" />
                <rect x="2.5" y="0" width="3" height="5" fill="#888" />
                <rect x="11.5" y="0" width="3" height="5" fill="#888" />
                <rect x="6" y="6" width="5" height="4" fill="#666" />
                <rect x="2" y="7" width="2" height="7" fill="#d8d2c0" />
                <rect x="11" y="7" width="2" height="7" fill="#d8d2c0" />
              </svg>
            </div>
            <div className="ml-[3px] h-[30px] w-px bg-[#dcdcdc]" />
            <div className="ml-[97px] flex h-[21px] w-[154px] items-center border border-[#c6c8cb] bg-[linear-gradient(180deg,#fdfdfd,#f0f0f0)] pl-[5px] text-[11.5px] text-[#555]">
              <span>Smart</span>
              <span className="ml-auto flex h-full w-[14px] items-center justify-center border-l border-[#c6c8cb]">
                <Down cls="" />
              </span>
            </div>
          </div>
        </div>

        {/* windows taskbar */}
        <div className="flex h-[40px] shrink-0 items-center gap-[2px] border-t border-[#8aa6bf] bg-[linear-gradient(90deg,#2f6a9f_0%,#4280b6_18%,#3f7bb0_42%,#2f5c85_72%,#1b3650_88%,#0e1a26_100%)] pl-[8px] text-white">
          <svg width="38" height="38" viewBox="0 0 38 38" className="mr-[12px] block shrink-0">
            <defs>
              <radialGradient id="orbG" cx="0.5" cy="0.35" r="0.7">
                <stop offset="0" stopColor="#6aa8cc" />
                <stop offset="1" stopColor="#0f3a5c" />
              </radialGradient>
            </defs>
            <circle cx="19" cy="19" r="18.5" fill="url(#orbG)" stroke="#9fd0ea" strokeWidth="1" />
            <path d="M9 13c3-2 5-2 8-1l-1 7c-3-1-5-1-8 1z" fill="#e8512a" />
            <path d="M19 12c3 1 6 1 9-1l-1 7c-3 2-6 2-9 1z" fill="#7fba3a" />
            <path d="M8 22c3-2 5-2 8-1l-1 7c-3-1-5-1-8 1z" fill="#2a8ed8" />
            <path d="M18 21c3 1 6 1 9-1l-1 7c-3 2-6 2-9 1z" fill="#f2b91c" />
          </svg>
          <Taskbtn>
            <svg width="34" height="32" viewBox="0 0 34 32" className="block">
              <path d="M7 17H27C27 9 22 7 17 7C10 7 7 12 7 18C7 25 11 28 17 28C22 28 24 26 26 23" fill="none" stroke="#2aa8e6" strokeWidth="5" />
              <path d="M4 30C0 24 11 8 28 3C33 2 33 6 31 10" fill="none" stroke="#f0b41c" strokeWidth="2" />
            </svg>
          </Taskbtn>
          <Grip />
          <Plain w="w-[66px] pl-[4px]">
            <svg width="32" height="32" viewBox="0 0 32 32" className="block">
              <path d="M1 4h12l2 3h16v24H1z" fill="#e9cf82" stroke="#a88a3a" />
              <path d="M2 9h28v21H2z" fill="#fbf0bb" />
              <path d="M3 4h4v2H3z" fill="#3aa04a" />
              <path d="M14 5h4v2h-4z" fill="#d04030" />
              <path d="M8 30V19h16v11" fill="#a8d4ea" stroke="#5f94b8" />
            </svg>
          </Plain>
          <Taskbtn>
            <svg width="32" height="32" viewBox="0 0 32 32" className="block">
              <ellipse cx="13" cy="19" rx="12" ry="11" fill="#c9d3dc" stroke="#889" />
              <circle cx="8" cy="17" r="2.5" fill="#e34a3a" />
              <circle cx="13" cy="11" r="2.5" fill="#f2c21c" />
              <circle cx="19" cy="13" r="2.5" fill="#4aa04a" />
              <circle cx="8" cy="24" r="2.5" fill="#3a7cd8" />
              <path d="M30 1L15 29l-2-1z" fill="#e89a2a" stroke="#a0601a" strokeWidth="0.7" />
            </svg>
          </Taskbtn>
          <Grip />
          <Plain w="w-[68px]">
            <div className="flex h-[30px] w-[30px]">
              <div className="flex h-[30px] w-[17px] items-center justify-center bg-[#1e7145] text-[15px] font-bold text-white">X</div>
              <div className="my-[3px] w-[13px] bg-[repeating-linear-gradient(0deg,#fff_0,#fff_3px,#1e7145_3px,#1e7145_4px)]" />
            </div>
          </Plain>
          <Plain w="w-[52px]">
            <div className="flex h-[30px] w-[30px]">
              <div className="flex h-[30px] w-[18px] items-center justify-center bg-[#2b579a] text-[14px] font-bold text-white">W</div>
              <div className="my-[3px] w-[12px] bg-[repeating-linear-gradient(0deg,#fff_0,#fff_3px,#2b579a_3px,#2b579a_4px)]" />
            </div>
          </Plain>
          <Plain w="w-[66px]">
            <svg width="28" height="28" viewBox="0 0 28 28" className="block">
              <rect width="28" height="28" fill="#fbfbfb" />
              <path d="M4 23c5-2 8-9 9-17 0-2 2-2 2 0 0 6 3 11 9 13-7-1-13 0-20 4z" fill="none" stroke="#d8201e" strokeWidth="1.5" />
            </svg>
          </Plain>
          <Taskbtn w="w-[58px]">
            <div className="relative h-[30px] w-[30px]">
              <div className="absolute left-0 top-[3px] z-10 flex h-[26px] w-[17px] items-center justify-center bg-[#0a66c2] text-[14px] font-bold text-white">O</div>
              <div className="absolute left-[15px] top-[5px] h-[12px] w-[13px] bg-white" />
              <div className="absolute left-[15px] top-[18px] h-[11px] w-[13px] bg-[#e8b878]" />
            </div>
          </Taskbtn>
          <Taskbtn w="w-[58px]">
            <svg width="30" height="30" viewBox="0 0 30 30" className="block">
              <circle cx="15" cy="15" r="14" fill="#e2352b" />
              <path d="M15 15L3 22a14 14 0 0 0 13 7z" fill="#2ba24c" />
              <path d="M15 15l12-7a14 14 0 0 1-11 21z" fill="#fbc81c" />
              <circle cx="15" cy="15" r="7" fill="#fff" />
              <circle cx="15" cy="15" r="5" fill="#3d86e8" />
            </svg>
          </Taskbtn>
          <Taskbtn w="w-[61px]">
            <svg width="32" height="32" viewBox="0 0 32 32" className="block">
              <rect x="1" y="1" width="30" height="30" fill="#e4f2f4" />
              <rect x="5" y="4" width="24" height="25" fill="#a8cd4f" stroke="#3c7da8" />
              <rect x="10" y="5" width="18" height="15" fill="#6ec6e8" stroke="#2d4e7e" />
            </svg>
          </Taskbtn>

          <div className="ml-auto flex items-center pr-[1px]">
            <span className="mb-[6px] mr-[18px] text-[12px] text-[#dfe6ec]">IT</span>
            <svg width="9" height="5" viewBox="0 0 9 5" className="mr-[11px] mt-[4px] block">
              <path d="M0 5h9L4.5 0z" fill="#fff" />
            </svg>
            <svg width="15" height="15" viewBox="0 0 15 15" className="mr-[9px] block">
              <path d="M1.5 0v15" stroke="#fff" strokeWidth="1.4" />
              <path d="M2 1h6l1 2h5l-2 3H8L7 5H2z" fill="#fff" />
            </svg>
            <svg width="16" height="15" viewBox="0 0 16 15" className="mr-[9px] block">
              <path d="M4 3h11v9H4zM9 12v2M6 14h7" fill="none" stroke="#fff" />
              <path d="M0 5h5M2.5 0v8M1 1v4h3V1" fill="none" stroke="#fff" />
            </svg>
            <svg width="16" height="16" viewBox="0 0 16 16" className="block">
              <path d="M1 5h3l4-4v11L4 9H1z" fill="#fff" />
              <circle cx="11" cy="11" r="4.5" fill="#d8201e" stroke="#fff" />
              <path d="M8 14l6-6" stroke="#fff" strokeWidth="1.5" />
            </svg>
            <div className="ml-[9px] flex w-[74px] flex-col items-center text-[12px] leading-[17px] text-white">
              <span>15:35</span>
              <span>06/02/2015</span>
            </div>
            <div className="ml-[4px] h-[38px] w-[13px] border border-[#50606c] bg-[linear-gradient(180deg,#566672,#1c2830)]" />
          </div>
        </div>
      </div>
    </div>
  );
}
